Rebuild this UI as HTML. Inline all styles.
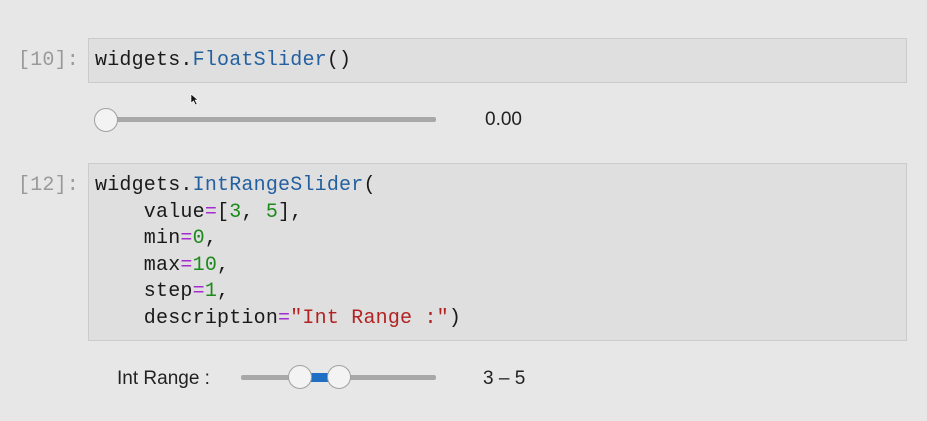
<!DOCTYPE html>
<html><head><style>
body{margin:0;width:927px;height:421px;background:#e7e7e7;position:relative;overflow:hidden;font-family:"Liberation Sans",sans-serif}
.p{position:absolute;left:18px;font:20px "Liberation Mono",monospace;color:#9a9a9a;letter-spacing:0.2px}
.cell{position:absolute;left:88px;width:819px;background:#dfdfdf;border:1px solid #cbcbcb;box-sizing:border-box}
pre{margin:0;position:absolute;left:6px;font:20px/26.5px "Liberation Mono",monospace;color:#1a1a1a;letter-spacing:0.2px}
.b{color:#2360a0}.g{color:#1d8a1d}.m{color:#a52bd0}.r{color:#b22222}
.t{position:absolute;height:5px;background:#a8a8a8;border-radius:2px}
.h{position:absolute;width:24px;height:24px;border-radius:50%;background:#f3f3f3;border:1.5px solid #a0a0a0;box-sizing:border-box}
.v{position:absolute;font-size:19px;color:#222}
</style></head><body>
<div class="p" style="top:49px">[10]:</div>
<div class="cell" style="top:38px;height:45px"><pre style="top:9px">widgets.<span class="b">FloatSlider</span>()</pre></div>
<div class="t" style="left:106px;width:330px;top:117px"></div>
<div class="h" style="left:94px;top:108px"></div>
<div class="v" style="left:485px;top:109px">0.00</div>
<div class="p" style="top:174px">[12]:</div>
<div class="cell" style="top:163px;height:178px"><pre style="top:9px">widgets.<span class="b">IntRangeSlider</span>(
    value<span class="m">=</span>[<span class="g">3</span>, <span class="g">5</span>],
    min<span class="m">=</span><span class="g">0</span>,
    max<span class="m">=</span><span class="g">10</span>,
    step<span class="m">=</span><span class="g">1</span>,
    description<span class="m">=</span><span class="r">"Int Range :"</span>)</pre></div>
<div class="v" style="left:117px;top:368px;font-size:19px">Int Range :</div>
<div class="t" style="left:241px;width:195px;top:375px"></div>
<div style="position:absolute;left:300px;width:40px;top:373px;height:9px;background:#1f6fc5"></div>
<div class="h" style="left:288px;top:365px"></div>
<div class="h" style="left:327px;top:365px"></div>
<div class="v" style="left:483px;top:368px">3 – 5</div>
<svg style="position:absolute;left:190px;top:93px" width="9" height="13"><path d="M1 1 L1 10 L3.5 8 L5.5 12 L7 11 L5 7 L8 7 Z" fill="#111" stroke="#fff" stroke-width=".6"/></svg>
</body></html>
